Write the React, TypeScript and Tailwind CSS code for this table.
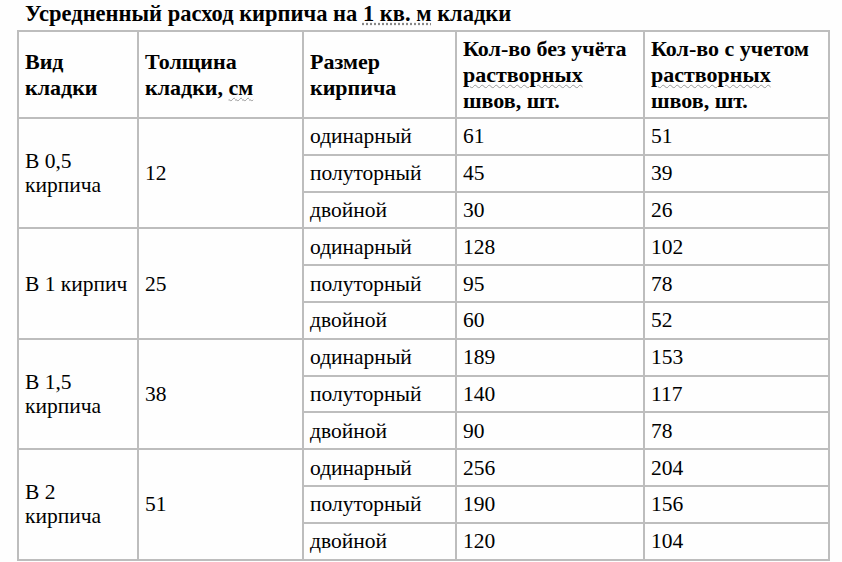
import React from "react";

const serif = { fontFamily: '"Liberation Serif", "Times New Roman", serif' };

type Group = { label: React.ReactNode; thick: string; rows: [string, string, string][] };

const groups: Group[] = [
  {
    label: (
      <>
        В 0,5
        <br />
        кирпича
      </>
    ),
    thick: "12",
    rows: [
      ["одинарный", "61", "51"],
      ["полуторный", "45", "39"],
      ["двойной", "30", "26"],
    ],
  },
  {
    label: <>В 1 кирпич</>,
    thick: "25",
    rows: [
      ["одинарный", "128", "102"],
      ["полуторный", "95", "78"],
      ["двойной", "60", "52"],
    ],
  },
  {
    label: (
      <>
        В 1,5
        <br />
        кирпича
      </>
    ),
    thick: "38",
    rows: [
      ["одинарный", "189", "153"],
      ["полуторный", "140", "117"],
      ["двойной", "90", "78"],
    ],
  },
  {
    label: (
      <>
        В 2
        <br />
        кирпича
      </>
    ),
    thick: "51",
    rows: [
      ["одинарный", "256", "204"],
      ["полуторный", "190", "156"],
      ["двойной", "120", "104"],
    ],
  },
];

const cell = "border-2 border-[#bdbdbd] px-[6px] align-middle text-left whitespace-nowrap";

export default function App() {
  return (
    <div className="w-[842px] h-[562px] overflow-hidden bg-[#fefefe] text-black" style={serif}>
      <div className="h-[30px] pl-[25px] pt-[1px] text-[22.5px] font-bold leading-[26px] whitespace-nowrap">
        Усредненный расход кирпича на{" "}
        <span className="underline decoration-dotted decoration-[#888] underline-offset-2">1 кв. м</span> кладки
      </div>
      <table className="ml-[17px] w-[811px] table-fixed border-collapse">
        <colgroup>
          <col className="w-[120px]" />
          <col className="w-[165px]" />
          <col className="w-[153px]" />
          <col className="w-[188px]" />
          <col className="w-[185px]" />
        </colgroup>
        <thead>
          <tr className="h-[87px] text-[22px] font-bold leading-[26px]">
            <th className={cell}>
              Вид
              <br />
              кладки
            </th>
            <th className={cell}>
              Толщина
              <br />
              кладки,{" "}
              <span className="underline decoration-wavy decoration-[#999] decoration-1 underline-offset-2">см</span>
            </th>
            <th className={cell}>
              Размер
              <br />
              кирпича
            </th>
            <th className={cell}>
              Кол-во без учёта
              <br />
              <span className="underline decoration-wavy decoration-[#999] decoration-1 underline-offset-2">растворных</span>
              <br />
              швов, шт.
            </th>
            <th className={cell}>
              Кол-во с учетом
              <br />
              <span className="underline decoration-wavy decoration-[#999] decoration-1 underline-offset-2">растворных</span>
              <br />
              швов, шт.
            </th>
          </tr>
        </thead>
        <tbody className="text-[21.5px] leading-[24px]">
          {groups.map((g, gi) =>
            g.rows.map((r, ri) => (
              <tr key={`${gi}-${ri}`} className="h-[36.8px]">
                {ri === 0 && (
                  <>
                    <td rowSpan={3} className={cell}>
                      {g.label}
                    </td>
                    <td rowSpan={3} className={cell}>
                      {g.thick}
                    </td>
                  </>
                )}
                <td className={cell}>{r[0]}</td>
                <td className={cell}>{r[1]}</td>
                <td className={cell}>{r[2]}</td>
              </tr>
            ))
          )}
        </tbody>
      </table>
    </div>
  );
}
